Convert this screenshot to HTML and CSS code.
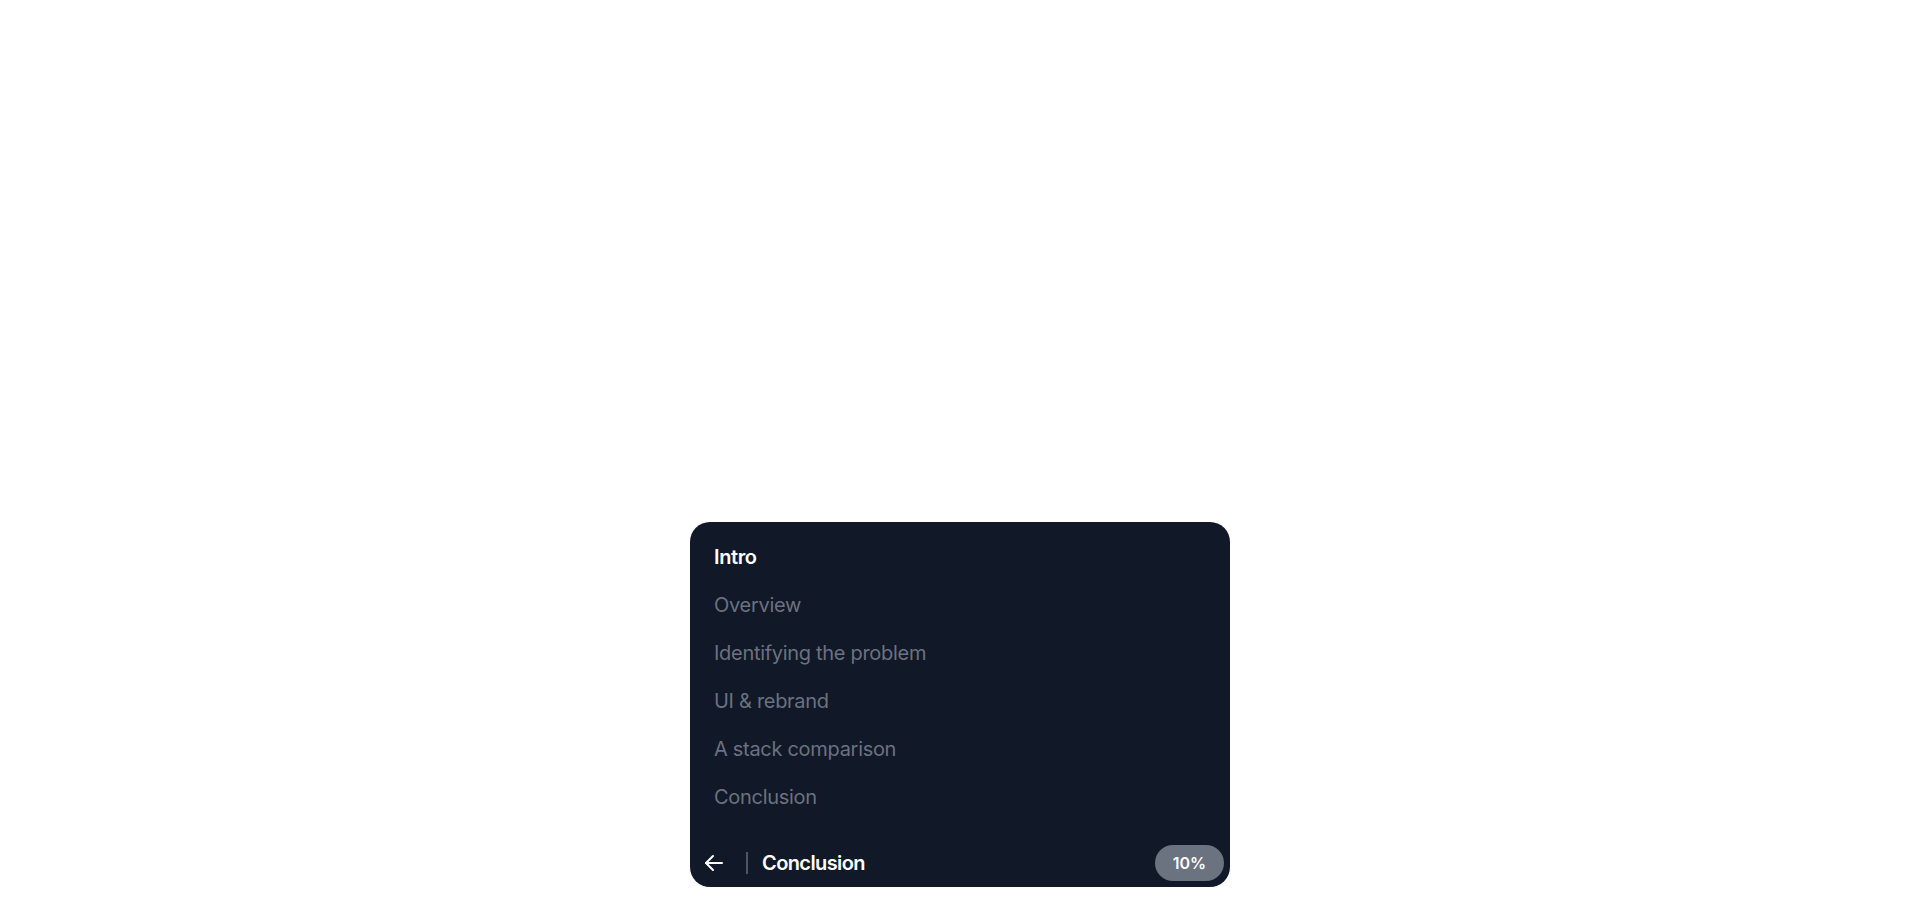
FILE: index.html
```html
<!DOCTYPE html>
<html lang="en">
<head>
<meta charset="utf-8">
<title>Table of contents</title>
<link rel="stylesheet" href="styles.css">
</head>
<body>
<main class="page">
  <nav class="toc">
    <ul class="toc-list">
      <li class="toc-item active">Intro</li>
      <li class="toc-item">Overview</li>
      <li class="toc-item">Identifying the problem</li>
      <li class="toc-item">UI &amp; rebrand</li>
      <li class="toc-item">A stack comparison</li>
      <li class="toc-item">Conclusion</li>
    </ul>
    <div class="toc-bar">
      <button class="back" aria-label="Back">
        <svg width="20" height="18" viewBox="-1 -1 20 18" fill="none" stroke="currentColor" stroke-width="2" stroke-linecap="round" stroke-linejoin="round"><path d="M17 8H1"/><path d="M8 15L1 8l7-7"/></svg>
      </button>
      <span class="divider"></span>
      <span class="current">Conclusion</span>
      <span class="progress">10%</span>
    </div>
  </nav>
</main>
</body>
</html>
```

FILE: styles.css
```css
* { box-sizing: border-box; }
html, body { margin: 0; padding: 0; background: #fff; }
body { font-family: Inter, "Noto Sans", sans-serif; }
.page {
  min-height: 100vh;
  display: flex;
  flex-direction: column;
  justify-content: flex-end;
  align-items: center;
  padding-bottom: 24px;
}
.toc {
  width: 540px;
  background: #111827;
  border-radius: 20px;
  overflow: hidden;
}
.toc-list {
  list-style: none;
  margin: 0;
  padding: 11px 24px 18px;
}
.toc-item {
  font-size: 20px;
  line-height: 28px;
  padding: 10px 0;
  color: #6b7280;
  font-weight: 400;
  letter-spacing: -0.3px;
}
.toc-item.active {
  color: #fff;
  font-weight: 600;
  letter-spacing: -0.4px;
}
.toc-bar {
  display: flex;
  align-items: center;
  padding: 6px;
}
.back {
  width: 36px;
  height: 36px;
  display: flex;
  align-items: center;
  justify-content: center;
  background: none;
  border: 0;
  padding: 0;
  color: #fff;
}
.divider {
  width: 2px;
  height: 22px;
  background: #4b5563;
  margin: 0 14px;
}
.current {
  color: #fff;
  font-size: 20px;
  font-weight: 600;
  letter-spacing: -0.6px;
  flex: 1;
}
.progress {
  height: 36px;
  width: 69px;
  border-radius: 18px;
  background: #6b7280;
  color: #fff;
  font-size: 16px;
  font-weight: 600;
  display: flex;
  align-items: center;
  justify-content: center;
}
```
